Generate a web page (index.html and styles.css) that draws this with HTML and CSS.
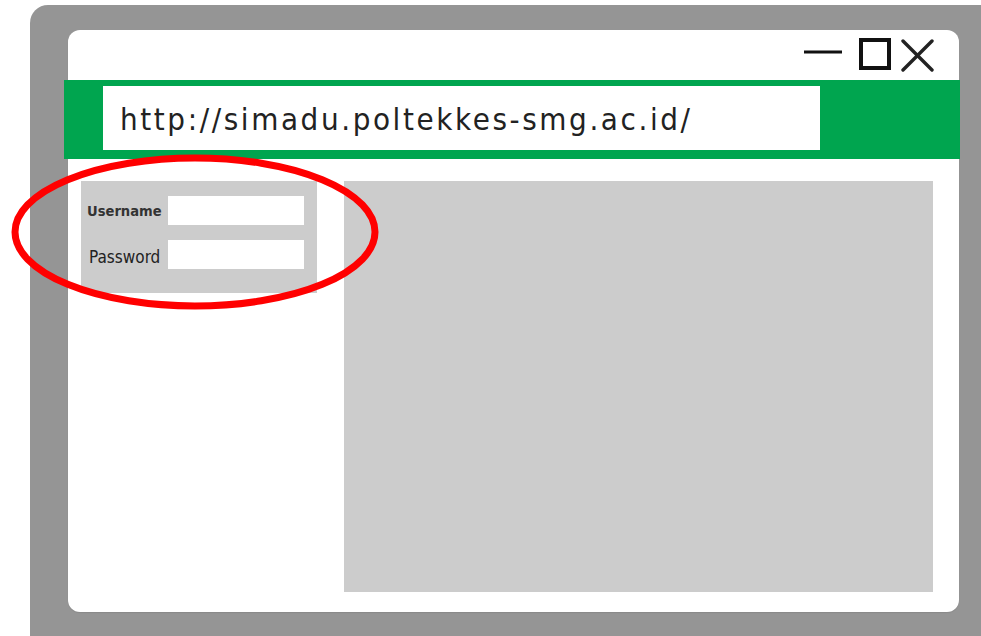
FILE: index.html
```html
<!DOCTYPE html>
<html lang="id">
<head>
<meta charset="utf-8">
<title>SIMADU</title>
<link rel="stylesheet" href="styles.css">
</head>
<body>
<div class="stage">
  <div class="frame">
    <div class="window">
      <div class="titlebar">
        <svg class="controls" width="130" height="40" viewBox="0 0 130 40">
          <!-- minimize -->
          <line x1="0" y1="16" x2="38" y2="16" stroke="#111" stroke-width="3"/>
          <!-- maximize -->
          <rect x="57" y="4" width="28" height="28" fill="none" stroke="#111" stroke-width="4"/>
          <!-- close -->
          <line x1="99" y1="5" x2="128" y2="34" stroke="#222" stroke-width="3.4" stroke-linecap="round"/>
          <line x1="128" y1="5" x2="99" y2="34" stroke="#222" stroke-width="3.4" stroke-linecap="round"/>
        </svg>
      </div>
      <div class="addressbar">
        <div class="url">http://simadu.poltekkes-smg.ac.id/</div>
      </div>
      <div class="content">
        <div class="login">
          <div class="row">
            <span class="label label-user">Username</span>
            <span class="field"></span>
          </div>
          <div class="row">
            <span class="label label-pass">Password</span>
            <span class="field"></span>
          </div>
        </div>
        <div class="main"></div>
      </div>
    </div>
  </div>
  <svg class="highlight" width="380" height="164" viewBox="0 0 380 164">
    <ellipse cx="195" cy="80" rx="180" ry="74" fill="none" stroke="#ff0000" stroke-width="7"/>
  </svg>
</div>
</body>
</html>
```

FILE: styles.css
```css
html, body {
  margin: 0;
  padding: 0;
  background: #ffffff;
  overflow: hidden;
}

.stage {
  position: relative;
  width: 981px;
  height: 636px;
  overflow: hidden;
}

.frame {
  margin: 5px 0 0 30px;
  width: 990px;
  height: 650px;
  background: #959595;
  border-radius: 18px;
  padding: 25px 0 0 38px;
  box-sizing: border-box;
}

.window {
  width: 891px;
  height: 582px;
  background: #ffffff;
  border-radius: 12px;
  box-shadow: 0 1px 1px rgba(0, 0, 0, 0.08);
}

.titlebar {
  height: 50px;
  display: flex;
  justify-content: flex-end;
  align-items: flex-start;
  padding: 6px 25px 0 0;
  box-sizing: border-box;
}

.controls {
  display: block;
}

.addressbar {
  margin-left: -4px;
  width: 896px;
  height: 79px;
  background: #00a54f;
  padding: 6px 0 0 39px;
  box-sizing: border-box;
}

.url {
  width: 717px;
  height: 64px;
  background: #ffffff;
  box-sizing: border-box;
  padding: 2px 0 0 17px;
  display: flex;
  align-items: center;
  font-family: "DejaVu Sans Condensed", "DejaVu Sans", sans-serif;
  font-size: 31px;
  color: #222222;
  letter-spacing: 2.6px;
}

.content {
  display: flex;
  align-items: flex-start;
  padding: 22px 0 0 13px;
  gap: 27px;
}

.login {
  width: 236px;
  height: 112px;
  background: #cccccc;
  box-sizing: border-box;
  padding: 15px 13px 0 6px;
  display: flex;
  flex-direction: column;
  gap: 15px;
}

.row {
  display: flex;
  align-items: center;
  justify-content: space-between;
}

.label {
  font-family: "DejaVu Sans Condensed", "DejaVu Sans", sans-serif;
  color: #222222;
}

.label-user {
  font-size: 14.6px;
  font-weight: bold;
  color: #333333;
}

.label-pass {
  font-size: 17px;
  padding: 4px 0 0 2px;
}

.field {
  width: 136px;
  height: 29px;
  background: #ffffff;
}

.main {
  width: 589px;
  height: 411px;
  background: #cccccc;
}

.highlight {
  position: absolute;
  left: 0;
  top: 152px;
}
```
